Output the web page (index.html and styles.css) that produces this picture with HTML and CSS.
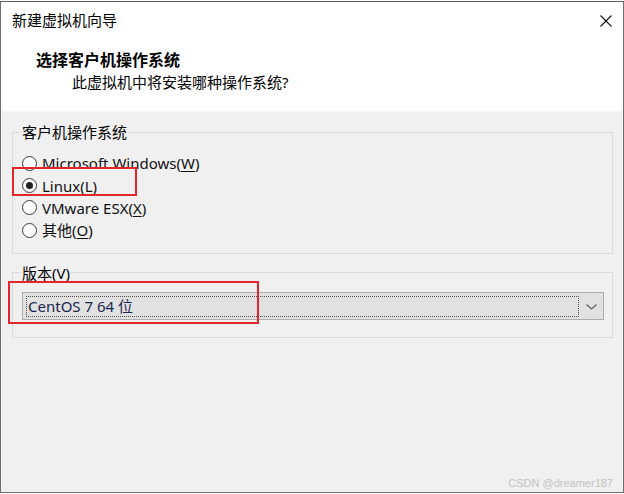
FILE: index.html
```html
<!DOCTYPE html>
<html lang="zh-CN">
<head>
<meta charset="utf-8">
<title>新建虚拟机向导</title>
<link rel="stylesheet" href="styles.css">
</head>
<body>
<div class="window">
  <div class="header">
    <div class="titlebar">
      <span class="title">新建虚拟机向导</span>
      <svg class="close" width="12" height="12" viewBox="0 0 12 12"><path d="M0.5 0.5 L11.5 11.5 M11.5 0.5 L0.5 11.5" stroke="#111" stroke-width="1.1" fill="none"/></svg>
    </div>
    <div class="heading">选择客户机操作系统</div>
    <div class="subheading">此虚拟机中将安装哪种操作系统?</div>
  </div>
  <div class="body">
    <fieldset class="group group-os">
      <legend>客户机操作系统</legend>
      <label class="radio"><span class="circle"></span><span class="text">Microsoft Windows(<u>W</u>)</span></label>
      <label class="radio checked"><span class="circle"></span><span class="text">Linux(<u>L</u>)</span><span class="mark mark-linux"></span></label>
      <label class="radio"><span class="circle"></span><span class="text">VMware ESX(<u>X</u>)</span></label>
      <label class="radio"><span class="circle"></span><span class="text">其他(<u>O</u>)</span></label>
    </fieldset>
    <fieldset class="group group-ver">
      <legend>版本(V)</legend>
      <div class="combo">
        <div class="combo-value">CentOS 7 64 位</div>
        <div class="combo-arrow"><svg width="11" height="6" viewBox="0 0 11 6"><path d="M0.5 0.5 L5.5 5 L10.5 0.5" stroke="#606060" stroke-width="1.2" fill="none"/></svg></div>
        <span class="mark mark-ver"></span>
      </div>
    </fieldset>
    <div class="watermark">CSDN @dreamer187</div>
  </div>
</div>
</body>
</html>
```
FILE: styles.css
```css
html, body {
  margin: 0;
  padding: 0;
  background: #ffffff;
}
body {
  width: 624px;
  height: 494px;
  overflow: hidden;
  font-family: "Noto Sans", "Noto Sans CJK SC", sans-serif;
  font-size: 15px;
  color: #000;
}
.window {
  box-sizing: border-box;
  margin-top: 1px;
  width: 624px;
  height: 492px;
  border: 1px solid #707070;
  border-top-color: #5a5a5a;
  display: flex;
  flex-direction: column;
  background: #f0f0f0;
}
.header {
  background: #ffffff;
  height: 109px;
  border-bottom: 1px solid #a0a0a0;
  flex: none;
}
.titlebar {
  height: 36px;
  display: flex;
  align-items: center;
  justify-content: space-between;
  padding: 0 11px 0 11px;
}
.title {
  font-size: 15px;
  line-height: 20px;
}
.close {
  display: block;
  margin-top: 2px;
}
.heading {
  margin-top: 11px;
  padding-left: 35px;
  font-size: 16px;
  font-weight: bold;
  line-height: 22px;
}
.subheading {
  padding-left: 71px;
  font-size: 15px;
  line-height: 22px;
}
.body {
  flex: 1;
  display: flex;
  flex-direction: column;
  padding: 0 10px 2px 11px;
  border-top: 1px solid #f7f7f7;
  margin-top: -1px;
}
.group {
  margin: 0;
  padding: 10px 8px 11px 8px;
  border: 1px solid #dadada;
  min-width: 0;
}
.group legend {
  padding: 0 1px;
  font-size: 15px;
  line-height: 20px;
}
.group-os {
  margin-top: 10px;
}
.group-ver {
  margin-top: 9px;
  padding: 9px 8px 17px 8px;
}
.radio {
  position: relative;
  display: flex;
  align-items: center;
  height: 22.4px;
  line-height: 22px;
}
.circle {
  box-sizing: border-box;
  width: 15px;
  height: 15px;
  margin-left: 1px;
  margin-right: 5px;
  border: 1px solid #3a3a3a;
  border-radius: 50%;
  background: #fff;
  display: flex;
  align-items: center;
  justify-content: center;
  flex: none;
}
.radio.checked .circle::after {
  content: "";
  width: 7px;
  height: 7px;
  border-radius: 50%;
  background: #222;
}
.text {
  color: #111;
  white-space: nowrap;
}
.text u {
  text-decoration-thickness: 1px;
  text-underline-offset: 2px;
}
.mark {
  position: absolute;
  box-sizing: border-box;
  border: 2px solid #e3262c;
  pointer-events: none;
}
.mark-linux {
  left: -9px;
  top: -7px;
  width: 125px;
  height: 29px;
}
.combo {
  position: relative;
  box-sizing: border-box;
  margin-left: 1px;
  height: 28px;
  border: 1px solid #adadad;
  background: #e1e1e1;
  display: flex;
  align-items: flex-start;
  padding: 3px 0 0 3px;
}
.combo-value {
  box-sizing: border-box;
  flex: 1;
  height: 21px;
  border: 1px dotted #505050;
  padding-left: 1px;
  font-size: 15px;
  line-height: 19px;
  color: #1b2550;
  white-space: nowrap;
}
.combo-arrow {
  width: 24px;
  height: 21px;
  display: flex;
  align-items: center;
  justify-content: center;
  flex: none;
}
.combo-arrow svg {
  display: block;
  margin-top: 1px;
}
.mark-ver {
  left: -15px;
  top: -12px;
  width: 251px;
  height: 43px;
}
.watermark {
  margin-top: auto;
  align-self: flex-end;
  font-family: "Liberation Sans", sans-serif;
  font-size: 11px;
  line-height: 14px;
  color: #c2c2c2;
  margin-right: 0;
}
```
